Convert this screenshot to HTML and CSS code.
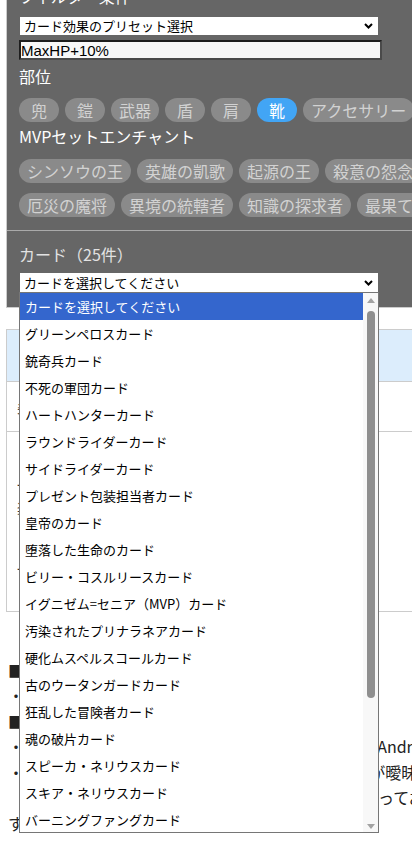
FILE: index.html
```html
<!DOCTYPE html>
<html lang="ja">
<head>
<meta charset="utf-8">
<title>カード検索</title>
<link rel="stylesheet" href="styles.css">
</head>
<body>
<div class="page">
  <section class="panel">
    <div class="sec sec-filter">
      <h2 class="ttl">フィルター条件</h2>
      <div class="sel sel-preset">
        <span>カード効果のプリセット選択</span>
        <svg class="chev" width="9" height="6" viewBox="0 0 9 6"><path d="M1 1 L4.5 4.5 L8 1" fill="none" stroke="#000" stroke-width="2"/></svg>
      </div>
      <input class="inp" type="text" value="MaxHP+10%">
      <h3 class="lbl">部位</h3>
      <div class="chips">
        <span class="chip">兜</span>
        <span class="chip">鎧</span>
        <span class="chip">武器</span>
        <span class="chip">盾</span>
        <span class="chip">肩</span>
        <span class="chip on">靴</span>
        <span class="chip">アクセサリー</span>
      </div>
      <h3 class="lbl lbl-mvp">MVPセットエンチャント</h3>
      <div class="chips chips-mvp">
        <span class="chip">シンソウの王</span>
        <span class="chip">英雄の凱歌</span>
        <span class="chip">起源の王</span>
        <span class="chip">殺意の怨念</span>
      </div>
      <div class="chips chips-mvp2">
        <span class="chip">厄災の魔将</span>
        <span class="chip">異境の統轄者</span>
        <span class="chip">知識の探求者</span>
        <span class="chip">最果ての旅人</span>
      </div>
    </div>
    <div class="sec sec-card">
      <h3 class="lbl lbl-card">カード（25件）</h3>
      <div class="sel-wrap">
        <div class="sel">
          <span>カードを選択してください</span>
          <svg class="chev" width="9" height="6" viewBox="0 0 9 6"><path d="M1 1 L4.5 4.5 L8 1" fill="none" stroke="#000" stroke-width="2"/></svg>
        </div>
        <div class="dropdown">
          <ul class="opts">
            <li class="cur">カードを選択してください</li>
            <li>グリーンペロスカード</li>
            <li>銃奇兵カード</li>
            <li>不死の軍団カード</li>
            <li>ハートハンターカード</li>
            <li>ラウンドライダーカード</li>
            <li>サイドライダーカード</li>
            <li>プレゼント包装担当者カード</li>
            <li>皇帝のカード</li>
            <li>堕落した生命のカード</li>
            <li>ビリー・コスルリースカード</li>
            <li>イグニゼム=セニア（MVP）カード</li>
            <li>汚染されたプリナラネアカード</li>
            <li>硬化ムスペルスコールカード</li>
            <li>古のウータンガードカード</li>
            <li>狂乱した冒険者カード</li>
            <li>魂の破片カード</li>
            <li>スピーカ・ネリウスカード</li>
            <li>スキア・ネリウスカード</li>
            <li>バーニングファングカード</li>
          </ul>
          <div class="sbar">
            <svg class="arr arr-up" width="8" height="5" viewBox="0 0 8 5"><polygon points="0,5 4,0 8,5" fill="#a3a3a3"/></svg>
            <div class="thumb"></div>
            <svg class="arr arr-down" width="8" height="5" viewBox="0 0 8 5"><polygon points="0,0 8,0 4,5" fill="#a3a3a3"/></svg>
          </div>
        </div>
      </div>
    </div>
  </section>

  <div class="tbl">
    <div class="tr tr-head"></div>
    <div class="tr tr-2">条件に一致するカード</div>
    <div class="tr tr-3">
      <p class="red">【靴】MaxHP+10%</p>
      <p>一定確率でHPを回復</p>
      <p>装備時、MaxSP+5%</p>
      <p class="red">【セット効果】</p>
      <p class="gap">一部のMVPセットと併用可</p>
    </div>
  </div>

  <div class="notes">
    <p>■カードの検索方法</p>
    <p class="li"><span class="b">・</span><span>条件を指定してカードを絞り込みます。</span></p>
    <p>■注意事項</p>
    <p class="li"><span class="b">・</span><span>スマホでご利用の場合は、ブラウザの仕様によりAndroid端末では表示が崩れる場合があります。</span></p>
    <p class="li"><span class="b">・</span><span>第2弾時点のデータです。一部カードの効果表記が曖昧な場合があります。<br>詳細は公式サイトの説明文を確認の上、実際に使ってお試しください。</span></p>
    <p>すべてのデータは参考値です。</p>
  </div>
</div>
</body>
</html>
```
FILE: styles.css
```css
html, body {
  margin: 0;
  padding: 0;
  overflow: hidden;
  background: #fff;
}
body {
  font-family: "Noto Sans CJK JP", "Noto Sans", sans-serif;
  color: #222;
}
.page {
  width: 640px;
}

/* filter panel */
.panel {
  margin: -16px 0 0 6px;
  background: #666;
  border-left: 1px solid #ccc;
  border-bottom: 1px solid #ccc;
}
.sec {
  padding-left: 12px;
}
.sec-filter {
  padding-bottom: 13px;
  border-bottom: 1px solid #aaa;
}
.sec-card {
  padding-top: 11px;
  padding-bottom: 15px;
}
.ttl, .lbl {
  margin: 0;
  font-size: 16px;
  line-height: 24px;
  font-weight: normal;
  color: #fff;
}
.lbl {
  margin-top: 4px;
}
.lbl-mvp {
  margin-top: 2px;
}
.lbl-card {
  margin-top: 0;
  color: #e2e2e2;
}

.sel {
  width: 358px;
  height: 18px;
  margin: 9px 0 0 1px;
  padding: 0 5px 0 4px;
  box-sizing: border-box;
  background: #fff;
  display: flex;
  align-items: center;
  justify-content: space-between;
  font-size: 13px;
  line-height: 18px;
  color: #000;
  white-space: nowrap;
}
.chev {
  flex: none;
}

.inp {
  display: block;
  width: 363px;
  height: 20px;
  margin: 5px 0 0 0;
  padding: 0;
  box-sizing: border-box;
  border-top: 2px solid #1e1e1e;
  border-left: 2px solid #1e1e1e;
  border-right: 2px solid #4a4a4a;
  border-bottom: 2px solid #4a4a4a;
  background: #f8f8f8;
  font-family: "Liberation Sans", Arial, sans-serif;
  font-size: 15px;
  color: #000;
  outline: none;
}

.chips {
  display: flex;
  gap: 6px;
  margin-top: 10px;
  white-space: nowrap;
}
.chips-mvp {
  margin-top: 11px;
}
.chip {
  flex: none;
  height: 24px;
  min-width: 40px;
  padding: 0 8px;
  box-sizing: border-box;
  border-radius: 12px;
  background: #8a8a8a;
  color: #d2d2d2;
  font-size: 16px;
  line-height: 24px;
  text-align: center;
}
.chip.on {
  background: #42a5f5;
  color: #fff;
}

/* card select + open dropdown */
.sel-wrap {
  position: relative;
  width: 358px;
  margin: 7px 0 0 1px;
}
.sel-wrap .sel {
  margin: 0;
  height: 19px;
}
.dropdown {
  position: absolute;
  top: 100%;
  left: -1px;
  width: 360px;
  height: 541px;
  box-sizing: border-box;
  border: 1px solid #767676;
  background: #fff;
  display: flex;
  z-index: 10;
  overflow: hidden;
}
.opts {
  list-style: none;
  margin: 0;
  padding: 0;
  flex: 1;
  min-width: 0;
}
.opts li {
  height: 27px;
  line-height: 27px;
  padding-left: 5px;
  font-size: 13px;
  color: #000;
  white-space: nowrap;
}
.opts li.cur {
  background: #3466cd;
  color: #fff;
}
.sbar {
  flex: none;
  width: 15px;
  background: #f8f8f8;
  display: flex;
  flex-direction: column;
  align-items: center;
}
.arr {
  display: block;
}
.arr-up {
  margin-top: 5px;
}
.thumb {
  margin-top: 8px;
  width: 8px;
  height: 387px;
  border-radius: 4px;
  background: #8f8f8f;
}
.arr-down {
  margin-top: auto;
  margin-bottom: 3px;
}

/* table under the panel */
.tbl {
  margin: 21px 0 0 6px;
  border-left: 1px solid #ccc;
  border-bottom: 1px solid #ccc;
}
.tr {
  border-top: 1px solid #ccc;
}
.tr-head {
  height: 51px;
  background: #dcedfc;
}
.tr-2 {
  height: 49px;
  line-height: 49px;
  padding-left: 10px;
  font-size: 15px;
  color: #444;
}
.tr-3 {
  height: 180px;
  box-sizing: border-box;
  padding: 17px 0 0 10px;
  font-size: 15px;
  color: #333;
}
.tr-3 p {
  margin: 0;
  line-height: 24px;
}
.tr-3 .red {
  color: #8b1c1c;
}
.tr-3 .gap {
  margin-top: 12px;
}

/* notes */
.notes {
  margin-top: 45.5px;
  padding-left: 8px;
  font-size: 16px;
  line-height: 25.5px;
  color: #222;
  white-space: nowrap;
}
.notes p {
  margin: 0;
}
.notes .li {
  display: flex;
}
.notes .b {
  flex: none;
  width: 18px;
}
```
